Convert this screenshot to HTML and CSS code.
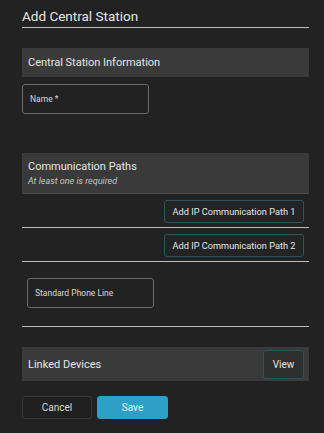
FILE: index.html
```html
<!DOCTYPE html>
<html>
<head>
    <meta charset="utf-8" />
    <title>Add Central Station</title>
    <link rel="stylesheet" href="styles.css">
</head>
<body>
    <div class="page">
        <h1 class="title">Add Central Station</h1>

        <div class="section-head first">
            <span class="section-title">Central Station Information</span>
        </div>
        <div class="field name-field">Name *</div>

        <div class="section-head comm">
            <span class="section-title">Communication Paths</span>
            <span class="section-sub">At least one is required</span>
        </div>
        <div class="path-row">
            <button class="btn outline">Add IP Communication Path 1</button>
        </div>
        <div class="path-row">
            <button class="btn outline">Add IP Communication Path 2</button>
        </div>
        <div class="phone-row">
            <div class="field phone-field">Standard Phone Line</div>
        </div>

        <div class="section-head linked">
            <span class="section-title">Linked Devices</span>
            <button class="btn outline view">View</button>
        </div>

        <div class="actions">
            <button class="btn cancel">Cancel</button>
            <button class="btn save">Save</button>
        </div>
    </div>
</body>
</html>
```

FILE: styles.css
```css
body {
    margin: 0;
    background: #222222;
    font-family: Roboto, "Liberation Sans", sans-serif;
    color: #e2e2e2;
}
.page {
    width: 287px;
    margin-left: 22px;
}
.title {
    margin: 0;
    padding-top: 8px;
    height: 19px;
    font-size: 13.5px;
    font-weight: 400;
    color: #e6e6e6;
    border-bottom: 1px solid #bdbdbd;
}
.section-head {
    background: #3a3a3a;
    padding: 0 6px;
    display: flex;
    flex-direction: column;
    justify-content: center;
}
.section-title {
    font-size: 11px;
    color: #e6e6e6;
}
.section-sub {
    font-size: 9px;
    font-style: italic;
    color: #c4c4c4;
    margin-top: 3px;
}
.first {
    margin-top: 20px;
    height: 29px;
}
.field {
    box-sizing: border-box;
    width: 127px;
    height: 30px;
    border: 1px solid #6a6a6a;
    border-radius: 3px;
    font-size: 8.5px;
    color: #d8d8d8;
    display: flex;
    align-items: center;
    padding-left: 7px;
}
.name-field {
    margin-top: 7px;
}
.comm {
    margin-top: 39px;
    height: 41px;
    border-bottom: 1px solid #4a4a4a;
    box-sizing: border-box;
}
.path-row {
    display: flex;
    justify-content: flex-end;
    padding: 6px 5px 4px 0;
    border-bottom: 1px solid #bdbdbd;
}
.btn {
    font-family: Roboto, "Liberation Sans", sans-serif;
    border-radius: 3px;
    cursor: pointer;
}
.outline {
    box-sizing: border-box;
    height: 23px;
    width: 140px;
    background: #232323;
    border: 1px solid #2b5565;
    color: #e6e6e6;
    font-size: 9.2px;
    padding: 0;
}
.phone-row {
    padding: 16px 0 18px 5px;
    border-bottom: 1px solid #bdbdbd;
}
.linked {
    margin-top: 20px;
    height: 34px;
    flex-direction: row;
    align-items: center;
    justify-content: space-between;
    padding-right: 5px;
}
.view {
    width: 41px;
    height: 29px;
    background: #2e2e2e;
    font-size: 10px;
}
.actions {
    display: flex;
    gap: 5px;
    margin-top: 15px;
}
.cancel,
.save {
    box-sizing: border-box;
    width: 70px;
    height: 23px;
    font-size: 10px;
}
.cancel {
    background: #202020;
    border: 1px solid #383838;
    color: #d8d8d8;
}
.save {
    width: 71px;
    background: #2e9fc7;
    border: 1px solid #2e9fc7;
    color: #f2f2f2;
}
```
